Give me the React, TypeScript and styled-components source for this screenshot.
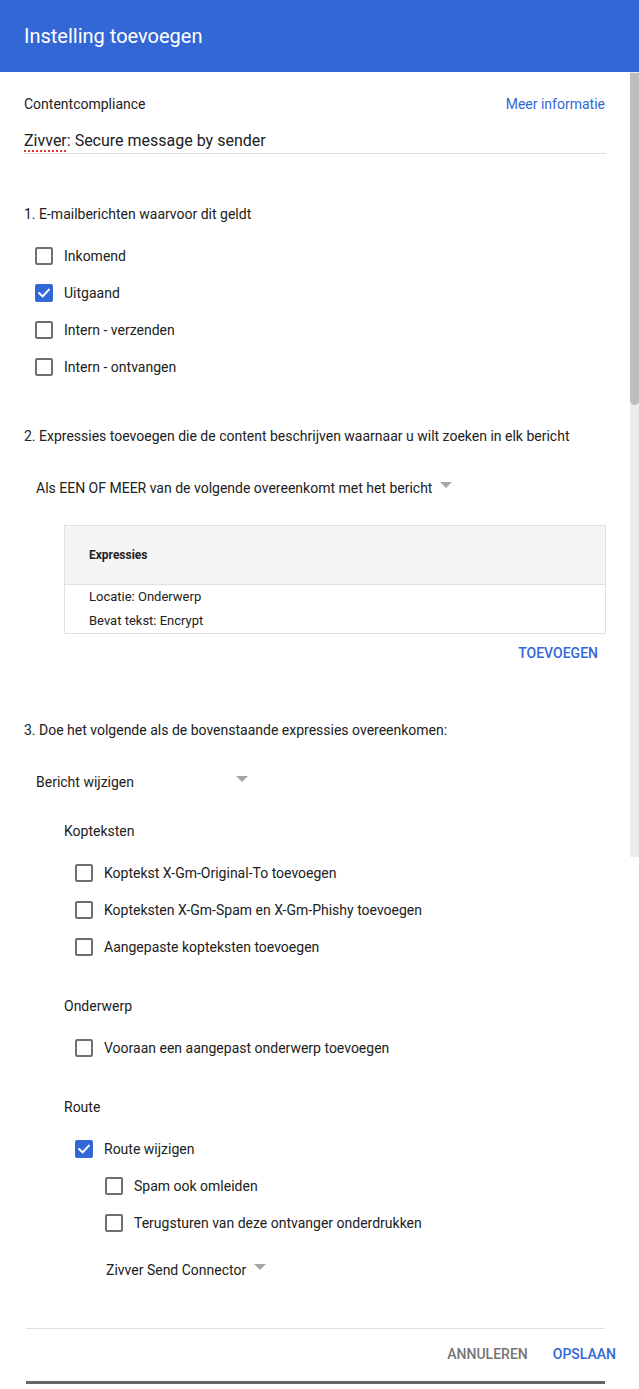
import styled, { createGlobalStyle } from "styled-components";

const GlobalStyle = createGlobalStyle`
  html, body {
    margin: 0;
    padding: 0;
    background: #ffffff;
  }
  body {
    font-family: Roboto, "Noto Sans", Arial, sans-serif;
    color: #212121;
    -webkit-font-smoothing: antialiased;
  }
`;

const blue = "#3367d6";

function Check({ checked }: { checked?: boolean }) {
  return (
    <Box $checked={checked}>
      {checked && (
        <svg width="14" height="14" viewBox="0 0 14 14">
          <path
            d="M2.3 7.2 L5.6 10.4 L11.8 3.8"
            fill="none"
            stroke="#fff"
            strokeWidth="2"
            strokeLinecap="square"
          />
        </svg>
      )}
    </Box>
  );
}

function Option({
  label,
  checked,
}: {
  label: string;
  checked?: boolean;
}) {
  return (
    <OptionRow>
      <Check checked={checked} />
      <span>{label}</span>
    </OptionRow>
  );
}

function App() {
  return (
    <>
      <GlobalStyle />
      <Dialog>
        <Header>Instelling toevoegen</Header>
        <Main>
          <Content>
            <TopRow>
              <span>Contentcompliance</span>
              <Link>Meer informatie</Link>
            </TopRow>
            <NameField>
              <Misspelled>Zivver</Misspelled>: Secure message by sender
            </NameField>

            <SectionTitle $gap={52}>1. E-mailberichten waarvoor dit geldt</SectionTitle>
            <OptionList $indent={11}>
              <Option label="Inkomend" />
              <Option label="Uitgaand" checked />
              <Option label="Intern - verzenden" />
              <Option label="Intern - ontvangen" />
            </OptionList>

            <SectionTitle $gap={43}>
              2. Expressies toevoegen die de content beschrijven waarnaar u wilt
              zoeken in elk bericht
            </SectionTitle>
            <Select $indent={12} $gap={36}>
              Als EEN OF MEER van de volgende overeenkomt met het bericht
              <Caret />
            </Select>

            <Table>
              <TableHead>Expressies</TableHead>
              <TableBody>
                <TableRow>Locatie: Onderwerp</TableRow>
                <TableRow>Bevat tekst: Encrypt</TableRow>
              </TableBody>
            </Table>
            <AddRow>
              <TextButton $color={blue}>TOEVOEGEN</TextButton>
            </AddRow>

            <SectionTitle $gap={61}>
              3. Doe het volgende als de bovenstaande expressies overeenkomen:
            </SectionTitle>
            <Select $indent={12} $gap={36} $width={212}>
              Bericht wijzigen
              <Caret />
            </Select>

            <Group>
              <GroupLabel>Kopteksten</GroupLabel>
              <OptionList $indent={11}>
                <Option label="Koptekst X-Gm-Original-To toevoegen" />
                <Option label="Kopteksten X-Gm-Spam en X-Gm-Phishy toevoegen" />
                <Option label="Aangepaste kopteksten toevoegen" />
              </OptionList>
            </Group>

            <Group $gap={33}>
              <GroupLabel>Onderwerp</GroupLabel>
              <OptionList $indent={11}>
                <Option label="Vooraan een aangepast onderwerp toevoegen" />
              </OptionList>
            </Group>

            <Group $gap={33}>
              <GroupLabel>Route</GroupLabel>
              <OptionList $indent={11}>
                <Option label="Route wijzigen" checked />
                <Nested>
                  <Option label="Spam ook omleiden" />
                  <Option label="Terugsturen van deze ontvanger onderdrukken" />
                </Nested>
              </OptionList>
              <Select $indent={42} $gap={21}>
                Zivver Send Connector
                <Caret />
              </Select>
            </Group>
          </Content>
          <ScrollRail>
            <ScrollThumb />
          </ScrollRail>
        </Main>

        <Footer>
          <Actions>
            <TextButton $color="#757575">ANNULEREN</TextButton>
            <TextButton $color={blue}>OPSLAAN</TextButton>
          </Actions>
        </Footer>
        <BottomEdge />
      </Dialog>
    </>
  );
}

const Dialog = styled.div`
  width: 639px;
  min-height: 1389px;
  background: #fff;
  display: flex;
  flex-direction: column;
`;

const Header = styled.div`
  height: 72px;
  background: ${blue};
  color: #fff;
  font-size: 20px;
  display: flex;
  align-items: center;
  padding: 0 24px;
  box-sizing: border-box;
`;

const Main = styled.div`
  display: flex;
  align-items: flex-start;
`;

const Content = styled.div`
  flex: 1;
  padding: 24px 24px 0 24px;
  font-size: 14px;
  line-height: 16px;
`;

const ScrollRail = styled.div`
  width: 9px;
  height: 785px;
  background: #ececec;
  padding-top: 1px;
  box-sizing: border-box;
`;

const ScrollThumb = styled.div`
  width: 9px;
  height: 332px;
  background: #bdbdbd;
  border-radius: 0 0 5px 5px;
`;

const TopRow = styled.div`
  display: flex;
  justify-content: space-between;
  align-items: center;
  height: 16px;
  margin-right: 1px;
`;

const Link = styled.span`
  color: ${blue};
`;

const NameField = styled.div`
  margin-top: 17px;
  height: 24px;
  line-height: 24px;
  font-size: 16px;
  border-bottom: 1px solid #e0e0e0;
`;

const Misspelled = styled.span`
  text-decoration: underline dotted #e53935;
  text-decoration-thickness: 2px;
  text-underline-offset: 4px;
`;

const SectionTitle = styled.div<{ $gap: number }>`
  margin-top: ${(p) => p.$gap}px;
  height: 16px;
  white-space: nowrap;
`;

const OptionList = styled.div<{ $indent: number }>`
  display: flex;
  flex-direction: column;
  margin-top: 15px;
  padding-left: ${(p) => p.$indent}px;
`;

const OptionRow = styled.div`
  display: flex;
  align-items: center;
  gap: 11px;
  height: 37px;
`;

const Box = styled.span<{ $checked?: boolean }>`
  width: 18px;
  height: 18px;
  box-sizing: border-box;
  border-radius: 2px;
  border: 2px solid ${(p) => (p.$checked ? blue : "#6f6f6f")};
  background: ${(p) => (p.$checked ? blue : "#fff")};
  display: flex;
  align-items: center;
  justify-content: center;
  flex: none;
`;

const Nested = styled.div`
  display: flex;
  flex-direction: column;
  padding-left: 30px;
`;

const Select = styled.div<{ $indent: number; $gap: number; $width?: number }>`
  margin-top: ${(p) => p.$gap}px;
  margin-left: ${(p) => p.$indent}px;
  height: 16px;
  display: flex;
  align-items: center;
  justify-content: ${(p) => (p.$width ? "space-between" : "flex-start")};
  gap: 8px;
  width: ${(p) => (p.$width ? `${p.$width}px` : "auto")};
`;

const Caret = styled.span`
  width: 0;
  height: 0;
  border-left: 6px solid transparent;
  border-right: 6px solid transparent;
  border-top: 6px solid #a6a6a6;
  margin-top: -6px;
`;

const Table = styled.div`
  margin: 29px 0 0 40px;
  border: 1px solid #e0e0e0;
`;

const TableHead = styled.div`
  height: 58px;
  background: #f5f5f5;
  border-bottom: 1px solid #e0e0e0;
  display: flex;
  align-items: center;
  padding-left: 24px;
  font-size: 12px;
  font-weight: 700;
`;

const TableBody = styled.div`
  display: flex;
  flex-direction: column;
`;

const TableRow = styled.div`
  height: 24px;
  display: flex;
  align-items: center;
  padding-left: 24px;
  font-size: 13px;
`;

const AddRow = styled.div`
  display: flex;
  justify-content: flex-end;
  margin-top: 11px;
  padding-right: 8px;
`;

const TextButton = styled.span<{ $color: string }>`
  color: ${(p) => p.$color};
  font-size: 14px;
  font-weight: 500;
  line-height: 16px;
`;

const Group = styled.div<{ $gap?: number }>`
  margin-top: ${(p) => p.$gap ?? 33}px;
  padding-left: 40px;
`;

const GroupLabel = styled.div`
  height: 16px;
`;

const Footer = styled.div`
  margin: 50px 34px 0 26px;
  border-top: 1px solid #e0e0e0;
  padding-top: 17px;
`;

const Actions = styled.div`
  display: flex;
  justify-content: flex-end;
  gap: 25px;
  margin-right: -11px;
  height: 16px;
`;

const BottomEdge = styled.div`
  margin: 19px 34px 0 26px;
  height: 3px;
  background: #666;
`;

export default App;
